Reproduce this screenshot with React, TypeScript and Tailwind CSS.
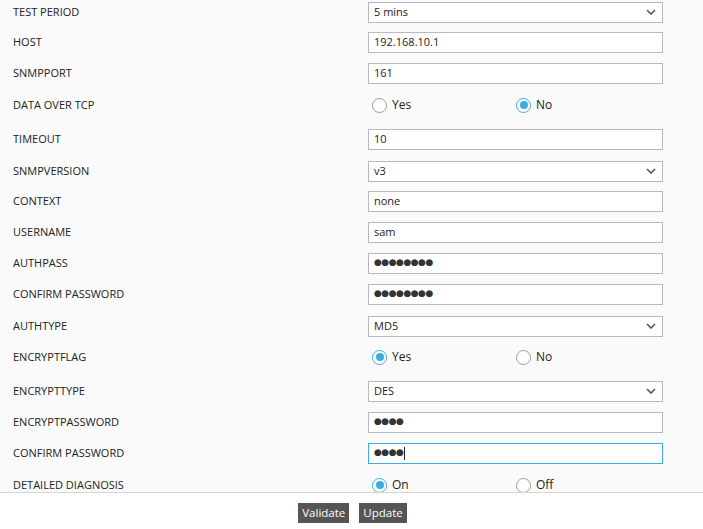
import React from "react";

type Row = { label: string; kind: "select" | "text" | "pass" | "radio"; value?: string; opts?: [string, string]; sel?: number; gap: number; focus?: boolean };

const rows: Row[] = [
  { label: "TEST PERIOD", kind: "select", value: "5 mins", gap: 1 },
  { label: "HOST", kind: "text", value: "192.168.10.1", gap: 8 },
  { label: "SNMPPORT", kind: "text", value: "161", gap: 9 },
  { label: "DATA OVER TCP", kind: "radio", opts: ["Yes", "No"], sel: 1, gap: 10 },
  { label: "TIMEOUT", kind: "text", value: "10", gap: 12 },
  { label: "SNMPVERSION", kind: "select", value: "v3", gap: 10 },
  { label: "CONTEXT", kind: "text", value: "none", gap: 8 },
  { label: "USERNAME", kind: "text", value: "sam", gap: 9 },
  { label: "AUTHPASS", kind: "pass", value: "●●●●●●●●", gap: 9 },
  { label: "CONFIRM PASSWORD", kind: "pass", value: "●●●●●●●●", gap: 9 },
  { label: "AUTHTYPE", kind: "select", value: "MD5", gap: 10 },
  { label: "ENCRYPTFLAG", kind: "radio", opts: ["Yes", "No"], sel: 0, gap: 9 },
  { label: "ENCRYPTTYPE", kind: "select", value: "DES", gap: 12 },
  { label: "ENCRYPTPASSWORD", kind: "pass", value: "●●●●", gap: 9 },
  { label: "CONFIRM PASSWORD", kind: "pass", value: "●●●●", gap: 9, focus: true },
  { label: "DETAILED DIAGNOSIS", kind: "radio", opts: ["On", "Off"], sel: 0, gap: 10 },
];

function Radio({ on, label }: { on: boolean; label: string }) {
  return (
    <div className="flex w-[144px] items-center gap-[5px] pl-[4px]">
      <span className={`flex h-[15px] w-[15px] items-center justify-center rounded-full border bg-white ${on ? "border-[#3aaee0]" : "border-[#9a9a9a]"}`}>
        {on && <span className="h-[8px] w-[8px] rounded-full bg-[#3aaee0]" />}
      </span>
      <span className="text-[12px] text-[#222]">{label}</span>
    </div>
  );
}

export default function App() {
  return (
    <div className="flex h-[529px] w-[703px] flex-col bg-white text-[#222]" style={{ fontFamily: '"Open Sans", "Noto Sans", sans-serif' }}>
      <div className="h-[492px] overflow-hidden bg-[#fafafa]">
        {rows.map((r, i) => (
          <div key={i} className="flex h-[22px] items-center" style={{ marginTop: r.gap }}>
            <div className="w-[368px] pl-[13px] text-[11px]">{r.label}</div>
            {r.kind === "radio" ? (
              <div className="flex">
                <Radio on={r.sel === 0} label={r.opts![0]} />
                <Radio on={r.sel === 1} label={r.opts![1]} />
              </div>
            ) : (
              <div className={`flex h-[21px] w-[295px] items-center justify-between border bg-white px-[5px] text-[11px] ${r.focus ? "border-[#3aaee0]" : "border-[#b8b8c0]"}`}>
                <span className={`flex items-center ${r.kind === "pass" ? "text-[9px] tracking-[-0.5px] text-[#333]" : ""}`} style={r.kind === "pass" ? { fontFamily: '"DejaVu Sans", sans-serif' } : undefined}>
                  {r.value}
                  {r.focus && <span className="ml-[1px] h-[13px] border-l border-[#222]" />}
                </span>
                {r.kind === "select" && (
                  <svg width="10" height="6" viewBox="0 0 10 6" className="mr-[1px]">
                    <path d="M1 1l4 4 4-4" fill="none" stroke="#555" strokeWidth="1.6" />
                  </svg>
                )}
              </div>
            )}
          </div>
        ))}
      </div>
      <div className="flex flex-1 justify-center gap-[10px] border-t border-[#d6d6d6] pt-[10px] pl-[2px]">
        <button className="h-[20px] bg-[#555] px-[4px] text-[11.5px] text-white">Validate</button>
        <button className="h-[20px] bg-[#555] px-[4px] text-[11.5px] text-white">Update</button>
      </div>
    </div>
  );
}
